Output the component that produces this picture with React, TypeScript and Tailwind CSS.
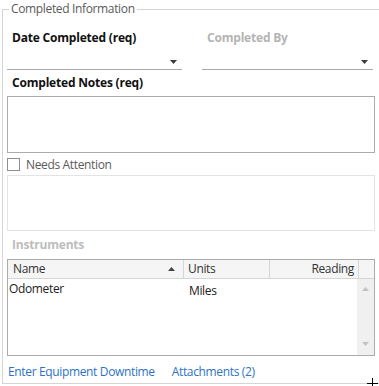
const FONT = { fontFamily: '"Open Sans", "Noto Sans", Arial, sans-serif' };

function ComboBox({ width }: { width: string }) {
  return (
    <div className={`relative h-[24px] border-b border-[#a9a9a9] ${width}`}>
      <svg className="absolute right-[5px] top-[14px]" width="7" height="4" viewBox="0 0 7 4">
        <path d="M0 0 L7 0 L3.5 4 Z" fill="#3c3c3c" />
      </svg>
    </div>
  );
}

function ScrollArrow({ up }: { up: boolean }) {
  return (
    <svg width="7" height="4" viewBox="0 0 7 4">
      <path d={up ? 'M0 4 L7 4 L3.5 0 Z' : 'M0 0 L7 0 L3.5 4 Z'} fill="#c2c2c2" />
    </svg>
  );
}

export default function App() {
  return (
    <div className="relative w-[379px] h-[386px] bg-white overflow-hidden text-[12px] tracking-[-0.35px]" style={FONT}>
      <fieldset className="ml-[2px] mt-[1px] w-[377px] h-[383px] border-l border-t border-b border-[#d5d5d5] pl-[4px]">
        <legend className="ml-[2px] px-[2px] leading-[16px] text-[#5a5a5a]">Completed Information</legend>

        {/* Date / Completed By */}
        <div className="mt-[13px] flex gap-[20px]">
          <div className="w-[175px]">
            <div className="pl-[5px] leading-[16px] font-bold tracking-[-0.2px] text-[#111]">Date Completed (req)</div>
            <ComboBox width="w-[175px]" />
          </div>
          <div className="w-[171px]">
            <div className="pl-[5px] leading-[16px] font-bold tracking-[-0.2px] text-[#b4b4b4]">Completed By</div>
            <ComboBox width="w-[171px]" />
          </div>
        </div>

        {/* Notes */}
        <div className="mt-[5px] pl-[5px] leading-[16px] font-bold tracking-[-0.2px] text-[#111]">Completed Notes (req)</div>
        <div className="mt-[5px] w-[368px] h-[57px] border border-[#ababab] bg-white" />

        {/* Needs attention */}
        <div className="mt-[4px] h-[15px] flex items-center gap-[6px]">
          <div className="w-[13px] h-[13px] border border-[#8f8f8f] bg-white" />
          <span className="leading-[15px] text-[#5a5a5a]">Needs Attention</span>
        </div>
        <div className="mt-[3px] w-[368px] h-[56px] border border-[#e3e3e3] bg-white" />

        {/* Instruments */}
        <div className="mt-[6px] pl-[5px] leading-[16px] font-bold tracking-[-0.2px] text-[#bdbdbd]">Instruments</div>
        <div className="mt-[6px] w-[368px] h-[97px] border border-[#ababab] flex flex-col">
          <div className="h-[19px] flex border-b border-[#d5d5d5] bg-[#f5f5f5] text-[#333] leading-[18px]">
            <div className="w-[176px] flex items-center justify-between pl-[5px] pr-[8px] border-r border-[#d5d5d5]">
              <span>Name</span>
              <svg width="7" height="4" viewBox="0 0 7 4">
                <path d="M0 4 L7 4 L3.5 0 Z" fill="#444" />
              </svg>
            </div>
            <div className="w-[86px] pl-[4px] border-r border-[#d5d5d5]">Units</div>
            <div className="w-[89px] pr-[4px] text-right border-r border-[#d5d5d5]">Reading</div>
            <div className="flex-1" />
          </div>
          <div className="flex-1 flex">
            <div className="flex-1 flex leading-[20px] text-[#222]">
              <div className="w-[180px] pl-[1px]">Odometer</div>
              <div className="pl-[1px] pt-[2px]">Miles</div>
            </div>
            <div className="w-[17px] bg-[#f0f0f0] flex flex-col items-center justify-between pt-[8px] pb-[9px]">
              <ScrollArrow up />
              <ScrollArrow up={false} />
            </div>
          </div>
        </div>

        {/* Links */}
        <div className="mt-[8px] flex gap-[17px] leading-[16px] text-[#2c73c4]">
          <span className="pl-[1px]">Enter Equipment Downtime</span>
          <span>Attachments (2)</span>
        </div>
      </fieldset>

      {/* cursor cross */}
      <div className="absolute left-[367px] top-[383px] w-[11px] h-[1px] bg-black" />
      <div className="absolute left-[372px] top-[378px] w-[1px] h-[8px] bg-black" />
    </div>
  );
}
